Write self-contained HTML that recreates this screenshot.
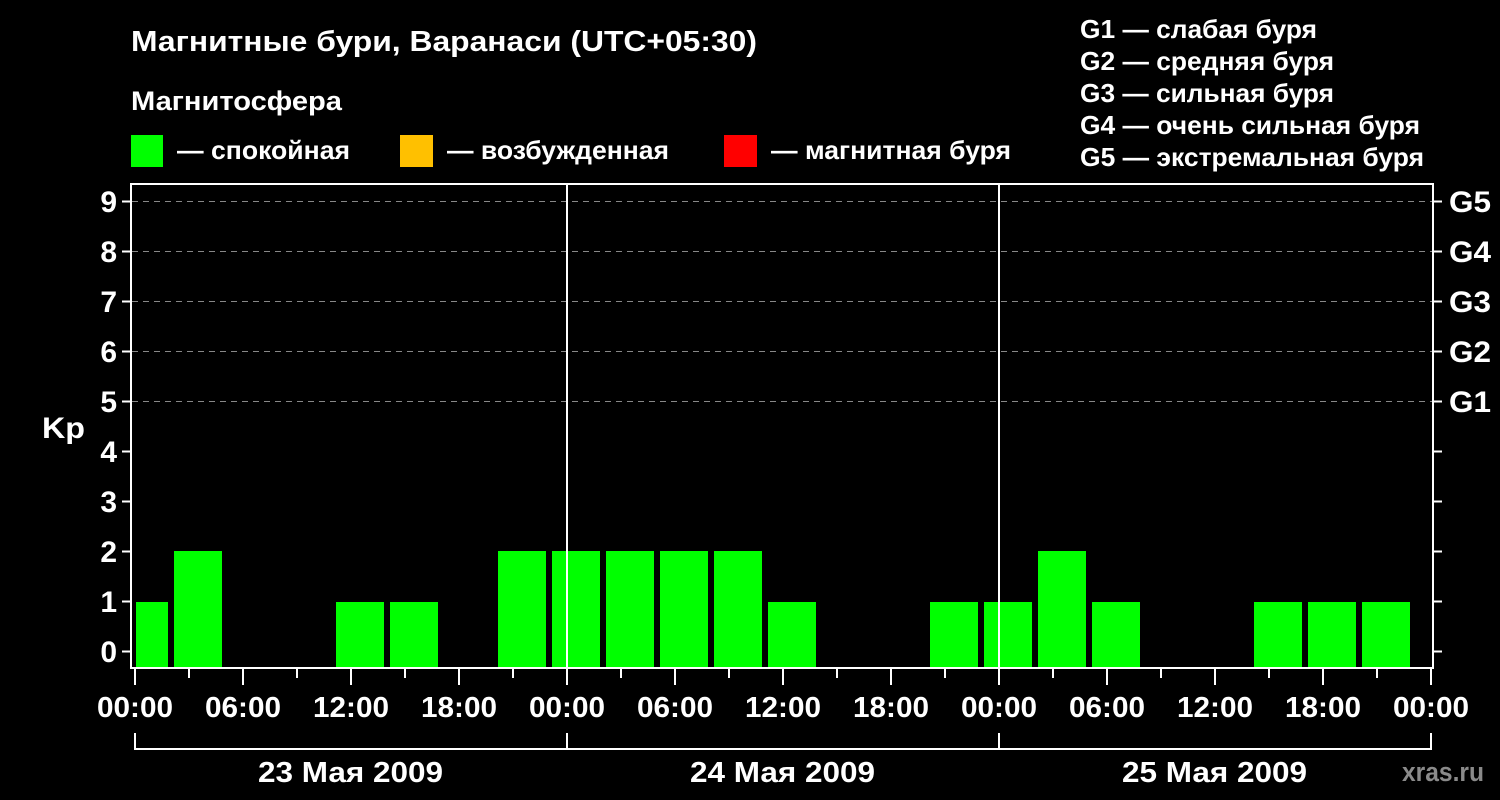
<!DOCTYPE html>
<html><head><meta charset="utf-8"><style>
html,body{margin:0;padding:0;background:#000;}
svg{display:block}
text{font-family:"Liberation Sans",sans-serif;font-weight:bold;fill:#fff}
</style></head><body>
<svg width="1500" height="800" viewBox="0 0 1500 800" xmlns="http://www.w3.org/2000/svg">
<rect width="1500" height="800" fill="#000"/>
<text x="131" y="51" font-size="29" textLength="626" lengthAdjust="spacingAndGlyphs">Магнитные бури, Варанаси (UTC+05:30)</text>
<text x="131" y="110" font-size="27" textLength="211" lengthAdjust="spacingAndGlyphs">Магнитосфера</text>
<rect x="131" y="135" width="32" height="32" fill="#00ff00"/>
<text x="177" y="159" font-size="26" textLength="173" lengthAdjust="spacingAndGlyphs">— спокойная</text>
<rect x="400" y="135" width="33" height="32" fill="#ffc000"/>
<text x="447" y="159" font-size="26" textLength="222" lengthAdjust="spacingAndGlyphs">— возбужденная</text>
<rect x="724" y="135" width="33" height="32" fill="#ff0000"/>
<text x="771" y="159" font-size="26" textLength="240" lengthAdjust="spacingAndGlyphs">— магнитная буря</text>
<g font-size="26">
<text x="1080" y="38" textLength="237" lengthAdjust="spacingAndGlyphs">G1 — слабая буря</text>
<text x="1080" y="70" textLength="254" lengthAdjust="spacingAndGlyphs">G2 — средняя буря</text>
<text x="1080" y="102" textLength="254" lengthAdjust="spacingAndGlyphs">G3 — сильная буря</text>
<text x="1080" y="134" textLength="340" lengthAdjust="spacingAndGlyphs">G4 — очень сильная буря</text>
<text x="1080" y="166" textLength="344" lengthAdjust="spacingAndGlyphs">G5 — экстремальная буря</text>
</g>
<g stroke="#888" stroke-width="1" stroke-dasharray="6,5">
<line x1="132" y1="201.5" x2="1432" y2="201.5"/>
<line x1="132" y1="251.5" x2="1432" y2="251.5"/>
<line x1="132" y1="301.5" x2="1432" y2="301.5"/>
<line x1="132" y1="351.5" x2="1432" y2="351.5"/>
<line x1="132" y1="401.5" x2="1432" y2="401.5"/>
</g>
<g fill="#00ff00">
<rect x="136" y="602" width="32" height="66"/>
<rect x="174" y="551" width="48" height="117"/>
<rect x="336" y="602" width="48" height="66"/>
<rect x="390" y="602" width="48" height="66"/>
<rect x="498" y="551" width="48" height="117"/>
<rect x="552" y="551" width="48" height="117"/>
<rect x="606" y="551" width="48" height="117"/>
<rect x="660" y="551" width="48" height="117"/>
<rect x="714" y="551" width="48" height="117"/>
<rect x="768" y="602" width="48" height="66"/>
<rect x="930" y="602" width="48" height="66"/>
<rect x="984" y="602" width="48" height="66"/>
<rect x="1038" y="551" width="48" height="117"/>
<rect x="1092" y="602" width="48" height="66"/>
<rect x="1254" y="602" width="48" height="66"/>
<rect x="1308" y="602" width="48" height="66"/>
<rect x="1362" y="602" width="48" height="66"/>
</g>
<g stroke="#fff" stroke-width="2" fill="none">
<rect x="131" y="184" width="1302" height="484"/>
<line x1="567" y1="184" x2="567" y2="668"/>
<line x1="999" y1="184" x2="999" y2="668"/>
<path d="M122 201.5H131M122 251.5H131M122 301.5H131M122 351.5H131M122 401.5H131M122 451.5H131M122 501.5H131M122 551.5H131M122 601.5H131M122 651.5H131"/>
<path d="M1433 201.5H1442M1433 251.5H1442M1433 301.5H1442M1433 351.5H1442M1433 401.5H1442M1433 451.5H1442M1433 501.5H1442M1433 551.5H1442M1433 601.5H1442M1433 651.5H1442"/>
<path d="M135 733V749H1431V733M567 733V749M999 733V749"/>
</g>
<g stroke="#fff" stroke-width="2">
<path d="M135 668V685M189 668V678M243 668V685M297 668V678M351 668V685M405 668V678M459 668V685M513 668V678M567 668V685M621 668V678M675 668V685M729 668V678M783 668V685M837 668V678M891 668V685M945 668V678M999 668V685M1053 668V678M1107 668V685M1161 668V678M1215 668V685M1269 668V678M1323 668V685M1377 668V678M1431 668V685"/>
</g>
<g font-size="30" text-anchor="end">
<text x="117" y="212">9</text><text x="117" y="262">8</text><text x="117" y="312">7</text>
<text x="117" y="362">6</text><text x="117" y="412">5</text><text x="117" y="462">4</text>
<text x="117" y="512">3</text><text x="117" y="562">2</text><text x="117" y="612">1</text>
<text x="117" y="662">0</text>
</g>
<text x="42" y="438" font-size="30" textLength="43" lengthAdjust="spacingAndGlyphs">Kp</text>
<g font-size="30">
<text x="1449" y="212" textLength="42" lengthAdjust="spacingAndGlyphs">G5</text><text x="1449" y="262" textLength="42" lengthAdjust="spacingAndGlyphs">G4</text><text x="1449" y="312" textLength="42" lengthAdjust="spacingAndGlyphs">G3</text>
<text x="1449" y="362" textLength="42" lengthAdjust="spacingAndGlyphs">G2</text><text x="1449" y="412" textLength="42" lengthAdjust="spacingAndGlyphs">G1</text>
</g>
<g font-size="29">
<text x="97" y="717" textLength="76" lengthAdjust="spacingAndGlyphs">00:00</text><text x="205" y="717" textLength="76" lengthAdjust="spacingAndGlyphs">06:00</text><text x="313" y="717" textLength="76" lengthAdjust="spacingAndGlyphs">12:00</text>
<text x="421" y="717" textLength="76" lengthAdjust="spacingAndGlyphs">18:00</text><text x="529" y="717" textLength="76" lengthAdjust="spacingAndGlyphs">00:00</text><text x="637" y="717" textLength="76" lengthAdjust="spacingAndGlyphs">06:00</text>
<text x="745" y="717" textLength="76" lengthAdjust="spacingAndGlyphs">12:00</text><text x="853" y="717" textLength="76" lengthAdjust="spacingAndGlyphs">18:00</text><text x="961" y="717" textLength="76" lengthAdjust="spacingAndGlyphs">00:00</text>
<text x="1069" y="717" textLength="76" lengthAdjust="spacingAndGlyphs">06:00</text><text x="1177" y="717" textLength="76" lengthAdjust="spacingAndGlyphs">12:00</text><text x="1285" y="717" textLength="76" lengthAdjust="spacingAndGlyphs">18:00</text>
<text x="1393" y="717" textLength="76" lengthAdjust="spacingAndGlyphs">00:00</text>
<text x="258" y="782" textLength="185" lengthAdjust="spacingAndGlyphs">23 Мая 2009</text>
<text x="690" y="782" textLength="185" lengthAdjust="spacingAndGlyphs">24 Мая 2009</text>
<text x="1122" y="782" textLength="185" lengthAdjust="spacingAndGlyphs">25 Мая 2009</text>
</g>
<text x="1402" y="781" font-size="27" style="fill:#8a8a8a" textLength="82" lengthAdjust="spacingAndGlyphs">xras.ru</text>
</svg>
</body></html>
